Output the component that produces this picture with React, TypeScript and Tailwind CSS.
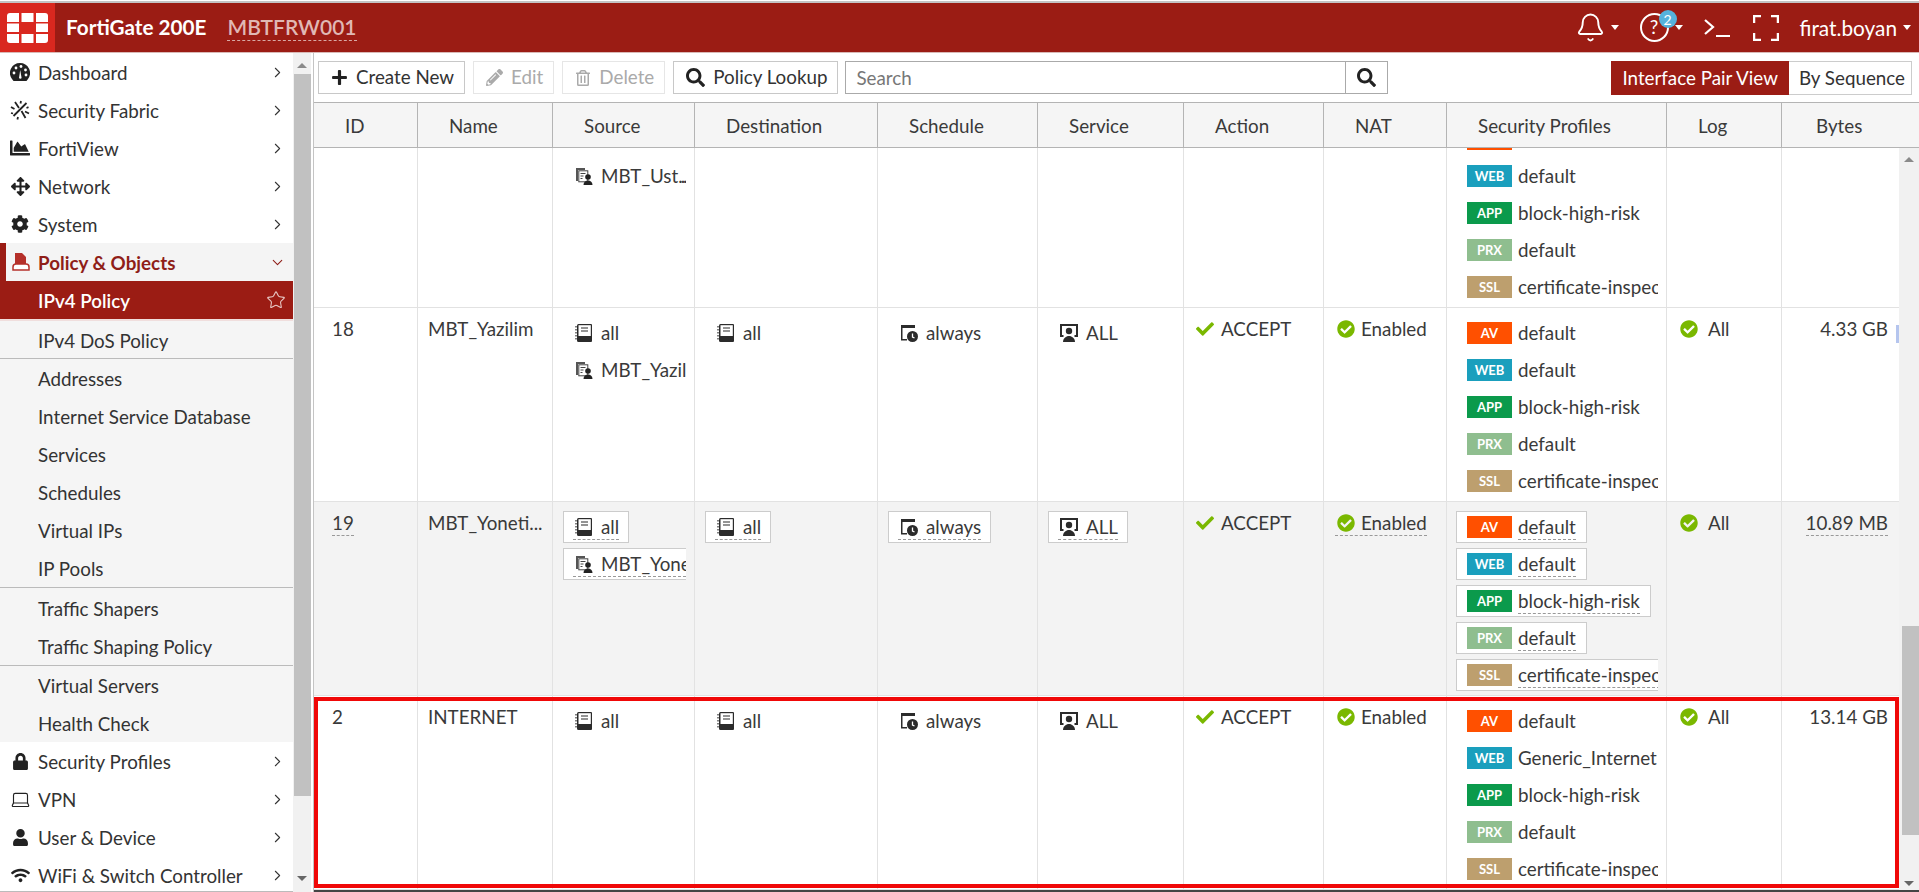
import { ReactNode } from 'react';
import { Bell, ChevronDown, ChevronRight, Laptop, Star } from 'lucide-react';
import {
  FaArrowsAlt,
  FaChartArea,
  FaCheck,
  FaCheckCircle,
  FaCog,
  FaLock,
  FaPencilAlt,
  FaPlus,
  FaRegTrashAlt,
  FaSearch,
  FaUser,
  FaWifi,
} from 'react-icons/fa';

const ROW_COLS =
  'grid grid-cols-[104px_135px_142px_183px_160px_146px_140px_123px_220px_115px_117px]';
const HEAD_COLS =
  'grid grid-cols-[104px_135px_142px_183px_160px_146px_140px_123px_220px_115px_137px]';

function Logo() {
  return (
    <svg viewBox="0 0 41 30" className="w-[41px] h-[30px]" fill="#fff">
      <path d="M12 0H3a3 3 0 0 0-3 3v6h12z" />
      <rect x="14.500" width="12" height="9" />
      <path d="M29 0h9a3 3 0 0 1 3 3v6H29z" />
      <rect y="10.500" width="12" height="8.500" />
      <rect x="29" y="10.500" width="12" height="8.500" />
      <path d="M0 21h12v9H3a3 3 0 0 1-3-3z" />
      <rect x="14.500" y="21" width="12" height="9" />
      <path d="M29 21h12v6a3 3 0 0 1-3 3h-9z" />
    </svg>
  );
}

function DashboardIcon() {
  return (
    <svg viewBox="0 0 20 18" className="w-[20px] h-[18px]">
      <path d="M10 0a10 10 0 0 0-8 16l1.500 2h13l1.500-2A10 10 0 0 0 10 0z" fill="#222" />
      <g fill="#fff">
        <circle cx="4" cy="10" r="1.400" />
        <circle cx="6" cy="5" r="1.400" />
        <circle cx="11" cy="3.500" r="1.400" />
        <circle cx="15.500" cy="7" r="1.400" />
        <circle cx="16" cy="12" r="1.400" />
        <path d="M9 15l1.200-8 1.400 8a1.500 1.500 0 0 1-2.600 0z" />
      </g>
    </svg>
  );
}

function FabricIcon() {
  return (
    <svg viewBox="0 0 20 20" className="w-[20px] h-[20px]" fill="none" stroke="#222" strokeWidth="1.800">
      <path d="M5 2l4 6M11.500 11l4 7M16.500 3L3.500 16M1 7l3.500 2M15 11.500l4 2M1 13l2 .5M16.500 8l2-.8M11 1l-.5 2.500M8 17l-.6 2.500" />
    </svg>
  );
}

function PolicyIcon() {
  return (
    <svg viewBox="0 0 18 18" className="w-[18px] h-[18px]">
      <path d="M3 0h7l4 4v7H3z" fill="#b5302a" />
      <path d="M1 17v-3a3 3 0 0 1 3-3h10a3 3 0 0 1 3 3v3z" fill="#fff" stroke="#b5302a" strokeWidth="1.500" />
    </svg>
  );
}

function AddressIcon() {
  return (
    <svg viewBox="0 0 18 18" className="w-[18px] h-[18px] shrink-0">
      <path d="M2 1.500A1.500 1.500 0 0 1 3.500 0H16a1 1 0 0 1 1 1v16a1 1 0 0 1-1 1H3.500A1.500 1.500 0 0 1 2 16.500z" fill="#2b2b2b" />
      <rect x="3.500" y="1.200" width="12.300" height="10.800" fill="#fff" />
      <path d="M6 4h7M6 7h7" stroke="#2b2b2b" strokeWidth="1.200" />
      <path d="M1 2v14" stroke="#555" strokeWidth="1.500" strokeDasharray="1.500 1.500" />
    </svg>
  );
}

function GroupIcon() {
  return (
    <svg viewBox="0 0 18 18" className="w-[18px] h-[18px] shrink-0">
      <path d="M1 1h9v2H3v11H1z" fill="#555" />
      <rect x="3.800" y="3.800" width="9" height="11" fill="#fff" stroke="#444" />
      <path d="M5.500 6.500h5M5.500 9h3M5.500 11.500h2" stroke="#444" />
      <circle cx="13" cy="10" r="2.800" fill="#222" />
      <path d="M8.500 18c0-3 2-4.500 4.500-4.500s4.500 1.500 4.500 4.500z" fill="#222" />
    </svg>
  );
}

function ScheduleIcon() {
  return (
    <svg viewBox="0 0 18 18" className="w-[18px] h-[18px] shrink-0">
      <path d="M1 1h14v3H2.500v11H7v1.500H1z" fill="#2b2b2b" />
      <circle cx="12.500" cy="12.500" r="5.500" fill="#2b2b2b" />
      <path d="M12.500 9.500v3.500l2 1" stroke="#fff" strokeWidth="1.300" fill="none" />
    </svg>
  );
}

function ServiceIcon() {
  return (
    <svg viewBox="0 0 18 18" className="w-[18px] h-[18px] shrink-0">
      <path d="M0 0h18v13h-3.500v-2H16V2H2v9h1.500v2H0z" fill="#2b2b2b" />
      <circle cx="9" cy="7" r="3.200" fill="#2b2b2b" />
      <path d="M3 18c0-3.500 3-6 6-6s6 2.500 6 6z" fill="#2b2b2b" />
    </svg>
  );
}

function ScrollBar({ up, down, thumb }: { up: string; down: string; thumb: string }) {
  return (
    <div className="relative h-full w-full bg-[#f1f1f1]">
      <div className={`absolute left-0 right-0 ${thumb} bg-[#c1c1c1]`} />
      <div className={`absolute left-1/2 -translate-x-1/2 ${up} h-0 w-0 border-x-[5px] border-b-[5px] border-x-transparent border-b-[#8a8a8a]`} />
      <div className={`absolute left-1/2 -translate-x-1/2 ${down} h-0 w-0 border-x-[5px] border-t-[5px] border-x-transparent border-t-[#666]`} />
    </div>
  );
}

function NavItem({ icon, label }: { icon: ReactNode; label: string }) {
  return (
    <div className="flex h-[38px] items-center bg-white pr-[7px] text-[#333]">
      <span className="flex w-[38px] justify-center pl-[4px] pr-[2px]">{icon}</span>
      <span className="flex-1 whitespace-nowrap pt-[2px]">{label}</span>
      <ChevronRight size={17} strokeWidth={1.500} />
    </div>
  );
}

function SubItem({ label }: { label: string }) {
  return <div className="flex h-[38px] items-center pl-[38px] pt-[2px] text-[#333]">{label}</div>;
}

function Sidebar() {
  return (
    <aside className="w-[293px] shrink-0 overflow-hidden border-b border-[#bbb] text-[18.8px] leading-none">
      <NavItem icon={<DashboardIcon />} label="Dashboard" />
      <NavItem icon={<FabricIcon />} label="Security Fabric" />
      <NavItem icon={<FaChartArea size={20} color="#222" />} label="FortiView" />
      <NavItem icon={<FaArrowsAlt size={19} color="#222" />} label="Network" />
      <NavItem icon={<FaCog size={18} color="#222" />} label="System" />
      <div className="flex h-[38px] items-center border-l-[6px] border-[#9b1c14] bg-[#f4f4f4] pr-[7px] font-bold text-[#8f1e18]">
        <span className="flex w-[32px] justify-center pr-[2px]"><PolicyIcon /></span>
        <span className="flex-1 pt-[2px]">Policy &amp; Objects</span>
        <ChevronDown size={17} strokeWidth={1.500} />
      </div>
      <div className="bg-[#f5f5f5]">
        <div className="flex h-[38px] items-center justify-between bg-[#9b1c14] pl-[38px] pr-[7px] font-semibold text-white">
          <span className="pt-[2px]">IPv4 Policy</span>
          <Star size={20} strokeWidth={1.300} color="#e8c9c6" />
        </div>
        <div className="h-[40px] border-t-[2px] border-b border-t-[#f0dedd] border-b-[#bbb]">
          <SubItem label="IPv4 DoS Policy" />
        </div>
        <div className="border-b border-[#bbb]">
          {['Addresses', 'Internet Service Database', 'Services', 'Schedules', 'Virtual IPs', 'IP Pools'].map((s) => (
            <SubItem key={s} label={s} />
          ))}
        </div>
        <div className="pt-[1px] border-b border-[#bbb]">
          <SubItem label="Traffic Shapers" />
          <SubItem label="Traffic Shaping Policy" />
        </div>
        <div>
          <SubItem label="Virtual Servers" />
          <SubItem label="Health Check" />
        </div>
      </div>
      <NavItem icon={<FaLock size={17} color="#222" />} label="Security Profiles" />
      <NavItem icon={<Laptop size={21} strokeWidth={1.300} color="#222" />} label="VPN" />
      <NavItem icon={<FaUser size={17} color="#222" />} label="User & Device" />
      <NavItem icon={<FaWifi size={19} color="#222" />} label="WiFi & Switch Controller" />
    </aside>
  );
}

function TopBar() {
  return (
    <header className="flex h-[50px] shrink-0 items-center border-b border-[#d9b9b6] bg-[#9b1c14] text-white">
      <div className="flex h-full w-[55px] items-center justify-center bg-[#d9281f]"><Logo /></div>
      <span className="ml-[11px] text-[20.7px] font-bold">FortiGate 200E</span>
      <span className="ml-[21px] border-b border-dashed border-[#d8a9a5] text-[21px] leading-[26px] font-semibold text-[#e0b8b4]">MBTFRW001</span>
      <div className="ml-auto flex items-center">
        <Bell size={31} strokeWidth={1.500} />
        <span className="ml-[5px] h-0 w-0 border-x-[4px] border-t-[5px] border-x-transparent border-t-white" />
        <div className="relative ml-[21px] flex h-[29px] w-[29px] items-center justify-center rounded-full border-[2px] border-white text-[19px]">
          ?
          <span className="absolute -right-[10px] -top-[5px] flex h-[18px] w-[18px] items-center justify-center rounded-full bg-[#56b2dc] text-[14px]">2</span>
        </div>
        <span className="ml-[6px] h-0 w-0 border-x-[4px] border-t-[5px] border-x-transparent border-t-white" />
        <svg viewBox="0 0 26 20" className="ml-[21px] h-[20px] w-[26px]" fill="none" stroke="#fff" strokeWidth="2.200">
          <path d="M1 2l8 7-8 7M12 18h14" />
        </svg>
        <svg viewBox="0 0 26 26" className="ml-[23px] h-[26px] w-[26px]" fill="none" stroke="#fff" strokeWidth="2.500">
          <path d="M1 8V1h7M18 1h7v7M25 18v7h-7M8 25H1v-7" />
        </svg>
        <span className="ml-[21px] text-[20.8px]">firat.boyan</span>
        <span className="ml-[6px] mr-[8px] h-0 w-0 border-x-[4px] border-t-[5px] border-x-transparent border-t-white" />
      </div>
    </header>
  );
}

function ToolButton({ icon, label, disabled }: { icon: ReactNode; label: string; disabled?: boolean }) {
  return (
    <button
      className={`flex h-[33px] items-center gap-[8px] border pl-[12px] pr-[10px] ${
        disabled ? 'border-[#e6e6e6] text-[#aaa]' : 'border-[#c8c8c8] text-[#333]'
      }`}
    >
      {icon}
      {label}
    </button>
  );
}

function Toolbar() {
  return (
    <div className="flex h-[49px] shrink-0 items-start pt-[8px] pl-[4px] pr-[7px] text-[18.8px] leading-none">
      <div className="flex gap-[8px]">
        <ToolButton icon={<FaPlus size={17} color="#222" />} label="Create New" />
        <ToolButton icon={<FaPencilAlt size={17} />} label="Edit" disabled />
        <ToolButton icon={<FaRegTrashAlt size={16} />} label="Delete" disabled />
        <ToolButton icon={<FaSearch size={19} color="#222" />} label="Policy Lookup" />
      </div>
      <div className="ml-[7px] flex h-[33px] w-[543px] border border-[#aaa]">
        <input placeholder="Search" className="w-[500px] border-r border-[#aaa] px-[10px] outline-none placeholder:text-[#777]" />
        <div className="flex flex-1 items-center justify-center"><FaSearch size={19} color="#222" /></div>
      </div>
      <div className="ml-auto flex h-[34px] items-center">
        <div className="flex h-full items-center bg-[#9b1c14] px-[11px] text-white">Interface Pair View</div>
        <div className="flex h-full items-center border border-l-0 border-[#ccc] pl-[10px] pr-[6px] text-[#333]">By Sequence</div>
      </div>
    </div>
  );
}

type Tone = 'AV' | 'WEB' | 'APP' | 'PRX' | 'SSL';

const TAG_BG: Record<Tone, string> = {
  AV: 'bg-[#ff5000]',
  WEB: 'bg-[#1a9fbd]',
  APP: 'bg-[#0b9a4c]',
  PRX: 'bg-[#8fbe8f]',
  SSL: 'bg-[#bd9f6e]',
};

function Chip({ hover, children }: { hover?: boolean; children: ReactNode }) {
  return (
    <div
      className={`mb-[5px] flex h-[32px] w-fit items-center whitespace-nowrap border px-[9px] ${
        hover ? 'border-[#ccc] bg-white' : 'border-transparent'
      }`}
    >
      <span className={`flex h-[26px] items-center gap-[8px] border-b border-dashed pl-[2px] ${hover ? 'border-[#999]' : 'border-transparent'}`}>
        {children}
      </span>
    </div>
  );
}

// name is left out for the row that is scrolled under the header
function Profile({ tag, name, hover }: { tag: Tone; name?: string; hover?: boolean }) {
  return (
    <div
      className={`mb-[5px] flex h-[32px] w-fit items-center whitespace-nowrap border pl-[10px] pr-[10px] ${
        hover ? 'border-[#ccc] bg-white' : 'border-transparent'
      }`}
    >
      <span className={`flex h-[22px] w-[45px] items-center justify-center text-[13px] font-bold text-white ${TAG_BG[tag]}`}>
        {name ? tag : ''}
      </span>
      {name && (
        <span className={`ml-[6px] mt-[3px] h-[23px] leading-[20px] border-b border-dashed ${hover ? 'border-[#999]' : 'border-transparent'}`}>{name}</span>
      )}
    </div>
  );
}

function Cell({ children, className = '' }: { children?: ReactNode; className?: string }) {
  return <div className={`min-w-0 overflow-hidden border-r border-[#e2e2e2] ${className}`}>{children}</div>;
}

type RowData = {
  id?: string;
  name?: string;
  source: ReactNode[];
  web?: string;
  bytes?: string;
  full?: boolean;
  hover?: boolean;
  bar?: boolean;
  outlined?: boolean;
};

function Row({ row }: { row: RowData }) {
  const h = row.hover;
  const dashed = h ? 'border-b border-dashed border-[#999]' : '';
  return (
    <div className={`${ROW_COLS} relative h-[194px] border-b border-[#e2e2e2] ${h ? 'bg-[#f3f3f3]' : 'bg-white'}`}>
      <Cell className="pl-[18px] pt-[8px]"><span className={`${dashed} inline-block h-[26px]`}>{row.id}</span></Cell>
      <Cell className="pl-[10px] pt-[8px] pr-[6px]"><span className="block truncate">{row.name}</span></Cell>
      <Cell className="pl-[10px] pt-[9px]"><div className="w-[123px] overflow-hidden">{row.source}</div></Cell>
      <Cell className="pl-[10px] pt-[9px]">
        {row.full && <Chip hover={h}><AddressIcon />all</Chip>}
      </Cell>
      <Cell className="pl-[10px] pt-[9px]">
        {row.full && <Chip hover={h}><ScheduleIcon />always</Chip>}
      </Cell>
      <Cell className="pl-[10px] pt-[9px]">
        {row.full && <Chip hover={h}><ServiceIcon />ALL</Chip>}
      </Cell>
      <Cell className="pl-[12px] pt-[8px]">
        {row.full && (
          <span className="flex h-[26px] items-center gap-[7px]"><FaCheck size={18} color="#7ab800" />ACCEPT</span>
        )}
      </Cell>
      <Cell className="pl-[11px] pt-[8px]">
        {row.full && (
          <span className={`inline-flex h-[26px] items-center gap-[6px] pl-[2px] ${dashed}`}><FaCheckCircle size={18} color="#7ab800" />Enabled</span>
        )}
      </Cell>
      <Cell className="pl-[9px] pt-[9px]">
        <div className="w-[202px] overflow-hidden">
          <Profile tag="AV" name={row.full ? 'default' : undefined} hover={h} />
          <Profile tag="WEB" name={row.web ?? 'default'} hover={h} />
          <Profile tag="APP" name="block-high-risk" hover={h} />
          <Profile tag="PRX" name="default" hover={h} />
          <Profile tag="SSL" name="certificate-inspec" hover={h} />
        </div>
      </Cell>
      <Cell className="pl-[13px] pt-[8px]">
        {row.full && (
          <span className="flex h-[26px] items-center gap-[10px]"><FaCheckCircle size={18} color="#7ab800" />All</span>
        )}
      </Cell>
      <div className="pr-[11px] pt-[8px] text-right">
        {row.bytes && <span className={`inline-block h-[26px] ${dashed}`}>{row.bytes}</span>}
      </div>
      {row.bar && <span className="absolute right-0 top-[17px] h-[18px] w-[3px] bg-[#b5c5ee]" />}
      {row.outlined && <div className="pointer-events-none absolute top-[1px] left-0 right-0 bottom-[1px] border-[4px] border-[#f00808]" />}
    </div>
  );
}

const rows: RowData[] = [
  {
    source: [
      <div key="spacer" className="h-[37px]" />,
      <Chip key="g"><GroupIcon /><span>MBT_Ust<span className="tracking-[-2px]">...</span></span></Chip>,
    ],
  },
  {
    id: '18',
    name: 'MBT_Yazilim',
    full: true,
    bytes: '4.33 GB',
    bar: true,
    source: [<Chip key="a"><AddressIcon />all</Chip>, <Chip key="g"><GroupIcon />MBT_Yazil</Chip>],
  },
  {
    id: '19',
    name: 'MBT_Yoneti...',
    full: true,
    hover: true,
    bytes: '10.89 MB',
    source: [<Chip key="a" hover><AddressIcon />all</Chip>, <Chip key="g" hover><GroupIcon />MBT_Yone</Chip>],
  },
  {
    id: '2',
    name: 'INTERNET',
    full: true,
    bytes: '13.14 GB',
    web: 'Generic_Internet',
    outlined: true,
    source: [<Chip key="a"><AddressIcon />all</Chip>],
  },
];

const HEADS = ['ID', 'Name', 'Source', 'Destination', 'Schedule', 'Service', 'Action', 'NAT', 'Security Profiles', 'Log', 'Bytes'];

function PolicyTable() {
  return (
    <div className="flex min-h-0 flex-1 flex-col text-[18.8px] leading-[26px] text-[#3a3a3a]">
      <div className={`${HEAD_COLS} h-[46px] shrink-0 border-y border-[#b4b4b4] bg-[#f5f5f5]`}>
        {HEADS.map((h, i) => (
          <div
            key={h}
            className={`flex items-center pt-[1px] ${i < HEADS.length - 1 ? 'border-r border-[#b4b4b4] pl-[31px]' : 'pl-[34px]'}`}
          >
            {h}
          </div>
        ))}
      </div>
      <div className="flex min-h-0 flex-1">
        <div className="w-[1585px] overflow-hidden">
          <div className="-mt-[34px]">
            {rows.map((r, i) => (
              <Row key={i} row={r} />
            ))}
          </div>
        </div>
        <div className="w-[20px]">
          <ScrollBar up="top-[9px]" down="bottom-[4px]" thumb="top-[478px] h-[209px] !left-[3px]" />
        </div>
      </div>
      <div className="h-[2px] shrink-0 bg-[#444]" />
    </div>
  );
}

export default function App() {
  return (
    <div className="flex h-[892px] w-[1919px] flex-col overflow-hidden bg-white font-['Lato',sans-serif]">
      <div className="h-[3px] shrink-0 border-b-[2px] border-[#c4c4c4]" />
      <TopBar />
      <div className="flex min-h-0 flex-1">
        <Sidebar />
        <div className="h-full w-[18px] shrink-0">
          <ScrollBar up="top-[10px]" down="bottom-[11px]" thumb="top-[21px] h-[722px] !left-[1px]" />
        </div>
        <div className="w-[2px] shrink-0" />
        <main className="flex min-w-0 flex-1 flex-col border-l border-[#c4c4c4]">
          <Toolbar />
          <PolicyTable />
        </main>
      </div>
    </div>
  );
}
